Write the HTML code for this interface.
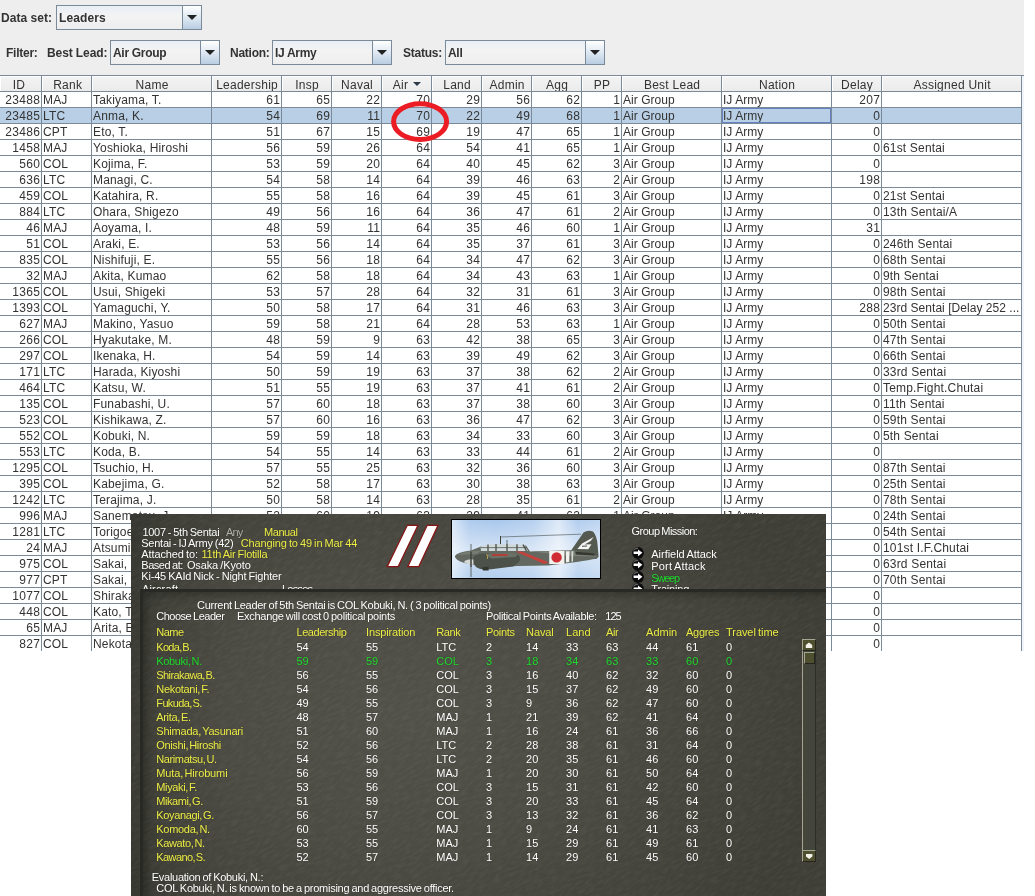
<!DOCTYPE html>
<html><head><meta charset="utf-8"><title>Leaders</title>
<style>
html,body{margin:0;padding:0;background:#fff;}
body{width:1035px;height:896px;position:relative;overflow:hidden;font-family:"Liberation Sans",sans-serif;font-size:12px;color:#333;}
#top{position:absolute;left:0;top:0;width:1024px;height:76px;background:#eee;}
#top,#tbl,#ov{will-change:transform;}
.lbl{position:absolute;font-weight:bold;font-size:12px;line-height:14px;white-space:nowrap;color:#333;letter-spacing:-0.25px;}
.combo{position:absolute;height:23px;border:1px solid #7a8a99;background:linear-gradient(#e9eff6,#f3f3f3 45%,#eeeeee);box-sizing:content-box;}
.combo .t{position:absolute;left:2px;top:5px;font-weight:bold;line-height:14px;white-space:nowrap;letter-spacing:-0.3px;}
.combo .b{position:absolute;right:0;top:0;width:18px;height:23px;border-left:1px solid #7a8a99;background:linear-gradient(#ffffff,#dbe6f1 55%,#b9cde2);}
.combo .b i{position:absolute;left:4px;top:9px;width:0;height:0;border-left:5px solid transparent;border-right:5px solid transparent;border-top:5px solid #222;}
#tbl{position:absolute;left:0;top:75px;width:1022px;height:576px;background:#fff;overflow:hidden;}
#hdr{position:absolute;left:0;top:0;width:1022px;height:17px;background:#7a8a99;}
.h{position:absolute;top:1px;height:15px;line-height:19px;letter-spacing:0.25px;text-align:center;background:linear-gradient(#f4f4f4,#ebebeb);box-shadow:inset 1px 1px 0 #fff;white-space:nowrap;overflow:hidden;}
.r{position:absolute;left:0;width:1022px;height:15px;border-bottom:1px solid #7a8a99;}
.r.sel{background:#b8cfe5;}
.c{position:absolute;top:0;height:15px;line-height:17px;white-space:nowrap;overflow:hidden;box-sizing:border-box;}
.c.l{padding-left:1px;text-align:left;letter-spacing:0.17px;}
.c.rt{padding-right:0.7px;text-align:right;letter-spacing:0.33px;}
.v{position:absolute;top:17px;width:1px;height:559px;background:#7a8a99;}
#ov{position:absolute;left:131px;top:514px;width:695px;height:382px;background:linear-gradient(to right,rgba(0,0,0,.16) 0,rgba(0,0,0,.07) 5%,rgba(0,0,0,0) 14%),radial-gradient(ellipse 60% 80% at 40% 52%,#51514a 0%,#4b4b43 45%,#3e3e37 100%);overflow:hidden;color:#fff;font-size:11px;}
#inner{position:absolute;left:9px;top:75px;width:700px;height:320px;background:transparent;border-top:3px solid #282824;border-left:3px solid #282824;overflow:hidden;box-shadow:inset 5px 5px 9px -2px rgba(0,0,0,.28);}
.sbb{position:absolute;width:12px;height:10px;background:#4d4f2e;border:1px solid;border-color:#a5a594 #25251f #25251f #a5a594;}
.g{position:absolute;white-space:nowrap;line-height:12px;font-size:11px;color:#fff;text-shadow:0 0 1px rgba(20,20,10,.55);}
.y{color:#eded48;}
.gr{color:#22dc30;}
.gy{color:#b0b0a8;}
</style></head><body>
<div id="top">
<span class="lbl" style="left:1px;top:11px;letter-spacing:0.05px">Data set:</span>
<div class="combo" style="left:56px;top:5px;width:144px"><span class="t" style="letter-spacing:0.1px">Leaders</span><span class="b"><i></i></span></div>
<span class="lbl" style="left:6px;top:46px">Filter:</span>
<span class="lbl" style="left:47px;top:46px;letter-spacing:-0.1px">Best Lead:</span>
<div class="combo" style="left:110px;top:40px;width:108px"><span class="t">Air Group</span><span class="b"><i></i></span></div>
<span class="lbl" style="left:230px;top:46px">Nation:</span>
<div class="combo" style="left:272px;top:40px;width:118px"><span class="t">IJ Army</span><span class="b"><i></i></span></div>
<span class="lbl" style="left:403px;top:46px">Status:</span>
<div class="combo" style="left:445px;top:40px;width:158px"><span class="t">All</span><span class="b"><i></i></span></div>
</div>
<div id="tbl">
<div id="hdr">
<div class="h" style="left:0px;padding-right:3px;width:38px">ID</div>
<div class="h" style="left:42px;padding-left:2.4px;width:46.6px">Rank</div>
<div class="h" style="left:92px;padding-left:1.2px;width:117.8px">Name</div>
<div class="h" style="left:212px;padding-left:1.2px;width:67.8px">Leadership</div>
<div class="h" style="left:282px;padding-left:1.2px;width:47.8px">Insp</div>
<div class="h" style="left:332px;padding-left:1.2px;width:47.8px">Naval</div>
<div class="h" style="left:382px;padding-left:1.2px;width:47.8px">Air <svg width="8" height="4" viewBox="0 0 8 4" style="vertical-align:3px;margin-left:1.5px"><path d="M0 0h8l-4 4z" fill="#2c3a48"/></svg></div>
<div class="h" style="left:432px;padding-left:1.2px;width:47.8px">Land</div>
<div class="h" style="left:482px;padding-left:1.2px;width:47.8px">Admin</div>
<div class="h" style="left:532px;padding-left:1.2px;width:47.8px">Agg</div>
<div class="h" style="left:582px;padding-left:1.2px;width:37.8px">PP</div>
<div class="h" style="left:622px;padding-left:1.2px;width:97.8px">Best Lead</div>
<div class="h" style="left:722px;padding-left:1.2px;width:107.8px">Nation</div>
<div class="h" style="left:832px;padding-left:1.2px;width:47.8px">Delay</div>
<div class="h" style="left:882px;padding-left:1.2px;width:137.8px">Assigned Unit</div>
</div>
<div class="r" style="top:17px">
<span class="c rt" style="left:0px;width:41px">23488</span>
<span class="c l" style="left:42px;width:49px">MAJ</span>
<span class="c l" style="left:92px;width:119px">Takiyama, T.</span>
<span class="c rt" style="left:212px;width:69px">61</span>
<span class="c rt" style="left:282px;width:49px">65</span>
<span class="c rt" style="left:332px;width:49px">22</span>
<span class="c rt" style="left:382px;width:49px">70</span>
<span class="c rt" style="left:432px;width:49px">29</span>
<span class="c rt" style="left:482px;width:49px">56</span>
<span class="c rt" style="left:532px;width:49px">62</span>
<span class="c rt" style="left:582px;width:39px">1</span>
<span class="c l" style="left:622px;width:99px;letter-spacing:0.04px">Air Group</span>
<span class="c l" style="left:722px;width:109px;letter-spacing:0.04px">IJ Army</span>
<span class="c rt" style="left:832px;width:49px">207</span>
</div>
<div class="r sel" style="top:33px">
<span class="c rt" style="left:0px;width:41px">23485</span>
<span class="c l" style="left:42px;width:49px">LTC</span>
<span class="c l" style="left:92px;width:119px">Anma, K.</span>
<span class="c rt" style="left:212px;width:69px">54</span>
<span class="c rt" style="left:282px;width:49px">69</span>
<span class="c rt" style="left:332px;width:49px">11</span>
<span class="c rt" style="left:382px;width:49px">70</span>
<span class="c rt" style="left:432px;width:49px">22</span>
<span class="c rt" style="left:482px;width:49px">49</span>
<span class="c rt" style="left:532px;width:49px">68</span>
<span class="c rt" style="left:582px;width:39px">1</span>
<span class="c l" style="left:622px;width:99px;letter-spacing:0.04px">Air Group</span>
<span class="c l" style="left:722px;width:109px;letter-spacing:0.04px">IJ Army</span>
<span class="c rt" style="left:832px;width:49px">0</span>
</div>
<div class="r" style="top:49px">
<span class="c rt" style="left:0px;width:41px">23486</span>
<span class="c l" style="left:42px;width:49px">CPT</span>
<span class="c l" style="left:92px;width:119px">Eto, T.</span>
<span class="c rt" style="left:212px;width:69px">51</span>
<span class="c rt" style="left:282px;width:49px">67</span>
<span class="c rt" style="left:332px;width:49px">15</span>
<span class="c rt" style="left:382px;width:49px">69</span>
<span class="c rt" style="left:432px;width:49px">19</span>
<span class="c rt" style="left:482px;width:49px">47</span>
<span class="c rt" style="left:532px;width:49px">65</span>
<span class="c rt" style="left:582px;width:39px">1</span>
<span class="c l" style="left:622px;width:99px;letter-spacing:0.04px">Air Group</span>
<span class="c l" style="left:722px;width:109px;letter-spacing:0.04px">IJ Army</span>
<span class="c rt" style="left:832px;width:49px">0</span>
</div>
<div class="r" style="top:65px">
<span class="c rt" style="left:0px;width:41px">1458</span>
<span class="c l" style="left:42px;width:49px">MAJ</span>
<span class="c l" style="left:92px;width:119px">Yoshioka, Hiroshi</span>
<span class="c rt" style="left:212px;width:69px">56</span>
<span class="c rt" style="left:282px;width:49px">59</span>
<span class="c rt" style="left:332px;width:49px">26</span>
<span class="c rt" style="left:382px;width:49px">64</span>
<span class="c rt" style="left:432px;width:49px">54</span>
<span class="c rt" style="left:482px;width:49px">41</span>
<span class="c rt" style="left:532px;width:49px">65</span>
<span class="c rt" style="left:582px;width:39px">1</span>
<span class="c l" style="left:622px;width:99px;letter-spacing:0.04px">Air Group</span>
<span class="c l" style="left:722px;width:109px;letter-spacing:0.04px">IJ Army</span>
<span class="c rt" style="left:832px;width:49px">0</span>
<span class="c l" style="left:882px;width:139px">61st Sentai</span>
</div>
<div class="r" style="top:81px">
<span class="c rt" style="left:0px;width:41px">560</span>
<span class="c l" style="left:42px;width:49px">COL</span>
<span class="c l" style="left:92px;width:119px">Kojima, F.</span>
<span class="c rt" style="left:212px;width:69px">53</span>
<span class="c rt" style="left:282px;width:49px">59</span>
<span class="c rt" style="left:332px;width:49px">20</span>
<span class="c rt" style="left:382px;width:49px">64</span>
<span class="c rt" style="left:432px;width:49px">40</span>
<span class="c rt" style="left:482px;width:49px">45</span>
<span class="c rt" style="left:532px;width:49px">62</span>
<span class="c rt" style="left:582px;width:39px">3</span>
<span class="c l" style="left:622px;width:99px;letter-spacing:0.04px">Air Group</span>
<span class="c l" style="left:722px;width:109px;letter-spacing:0.04px">IJ Army</span>
<span class="c rt" style="left:832px;width:49px">0</span>
</div>
<div class="r" style="top:97px">
<span class="c rt" style="left:0px;width:41px">636</span>
<span class="c l" style="left:42px;width:49px">LTC</span>
<span class="c l" style="left:92px;width:119px">Managi, C.</span>
<span class="c rt" style="left:212px;width:69px">54</span>
<span class="c rt" style="left:282px;width:49px">58</span>
<span class="c rt" style="left:332px;width:49px">14</span>
<span class="c rt" style="left:382px;width:49px">64</span>
<span class="c rt" style="left:432px;width:49px">39</span>
<span class="c rt" style="left:482px;width:49px">46</span>
<span class="c rt" style="left:532px;width:49px">63</span>
<span class="c rt" style="left:582px;width:39px">2</span>
<span class="c l" style="left:622px;width:99px;letter-spacing:0.04px">Air Group</span>
<span class="c l" style="left:722px;width:109px;letter-spacing:0.04px">IJ Army</span>
<span class="c rt" style="left:832px;width:49px">198</span>
</div>
<div class="r" style="top:113px">
<span class="c rt" style="left:0px;width:41px">459</span>
<span class="c l" style="left:42px;width:49px">COL</span>
<span class="c l" style="left:92px;width:119px">Katahira, R.</span>
<span class="c rt" style="left:212px;width:69px">55</span>
<span class="c rt" style="left:282px;width:49px">58</span>
<span class="c rt" style="left:332px;width:49px">16</span>
<span class="c rt" style="left:382px;width:49px">64</span>
<span class="c rt" style="left:432px;width:49px">39</span>
<span class="c rt" style="left:482px;width:49px">45</span>
<span class="c rt" style="left:532px;width:49px">61</span>
<span class="c rt" style="left:582px;width:39px">3</span>
<span class="c l" style="left:622px;width:99px;letter-spacing:0.04px">Air Group</span>
<span class="c l" style="left:722px;width:109px;letter-spacing:0.04px">IJ Army</span>
<span class="c rt" style="left:832px;width:49px">0</span>
<span class="c l" style="left:882px;width:139px">21st Sentai</span>
</div>
<div class="r" style="top:129px">
<span class="c rt" style="left:0px;width:41px">884</span>
<span class="c l" style="left:42px;width:49px">LTC</span>
<span class="c l" style="left:92px;width:119px">Ohara, Shigezo</span>
<span class="c rt" style="left:212px;width:69px">49</span>
<span class="c rt" style="left:282px;width:49px">56</span>
<span class="c rt" style="left:332px;width:49px">16</span>
<span class="c rt" style="left:382px;width:49px">64</span>
<span class="c rt" style="left:432px;width:49px">36</span>
<span class="c rt" style="left:482px;width:49px">47</span>
<span class="c rt" style="left:532px;width:49px">61</span>
<span class="c rt" style="left:582px;width:39px">2</span>
<span class="c l" style="left:622px;width:99px;letter-spacing:0.04px">Air Group</span>
<span class="c l" style="left:722px;width:109px;letter-spacing:0.04px">IJ Army</span>
<span class="c rt" style="left:832px;width:49px">0</span>
<span class="c l" style="left:882px;width:139px">13th Sentai/A</span>
</div>
<div class="r" style="top:145px">
<span class="c rt" style="left:0px;width:41px">46</span>
<span class="c l" style="left:42px;width:49px">MAJ</span>
<span class="c l" style="left:92px;width:119px">Aoyama, I.</span>
<span class="c rt" style="left:212px;width:69px">48</span>
<span class="c rt" style="left:282px;width:49px">59</span>
<span class="c rt" style="left:332px;width:49px">11</span>
<span class="c rt" style="left:382px;width:49px">64</span>
<span class="c rt" style="left:432px;width:49px">35</span>
<span class="c rt" style="left:482px;width:49px">46</span>
<span class="c rt" style="left:532px;width:49px">60</span>
<span class="c rt" style="left:582px;width:39px">1</span>
<span class="c l" style="left:622px;width:99px;letter-spacing:0.04px">Air Group</span>
<span class="c l" style="left:722px;width:109px;letter-spacing:0.04px">IJ Army</span>
<span class="c rt" style="left:832px;width:49px">31</span>
</div>
<div class="r" style="top:161px">
<span class="c rt" style="left:0px;width:41px">51</span>
<span class="c l" style="left:42px;width:49px">COL</span>
<span class="c l" style="left:92px;width:119px">Araki, E.</span>
<span class="c rt" style="left:212px;width:69px">53</span>
<span class="c rt" style="left:282px;width:49px">56</span>
<span class="c rt" style="left:332px;width:49px">14</span>
<span class="c rt" style="left:382px;width:49px">64</span>
<span class="c rt" style="left:432px;width:49px">35</span>
<span class="c rt" style="left:482px;width:49px">37</span>
<span class="c rt" style="left:532px;width:49px">61</span>
<span class="c rt" style="left:582px;width:39px">3</span>
<span class="c l" style="left:622px;width:99px;letter-spacing:0.04px">Air Group</span>
<span class="c l" style="left:722px;width:109px;letter-spacing:0.04px">IJ Army</span>
<span class="c rt" style="left:832px;width:49px">0</span>
<span class="c l" style="left:882px;width:139px">246th Sentai</span>
</div>
<div class="r" style="top:177px">
<span class="c rt" style="left:0px;width:41px">835</span>
<span class="c l" style="left:42px;width:49px">COL</span>
<span class="c l" style="left:92px;width:119px">Nishifuji, E.</span>
<span class="c rt" style="left:212px;width:69px">55</span>
<span class="c rt" style="left:282px;width:49px">56</span>
<span class="c rt" style="left:332px;width:49px">18</span>
<span class="c rt" style="left:382px;width:49px">64</span>
<span class="c rt" style="left:432px;width:49px">34</span>
<span class="c rt" style="left:482px;width:49px">47</span>
<span class="c rt" style="left:532px;width:49px">62</span>
<span class="c rt" style="left:582px;width:39px">3</span>
<span class="c l" style="left:622px;width:99px;letter-spacing:0.04px">Air Group</span>
<span class="c l" style="left:722px;width:109px;letter-spacing:0.04px">IJ Army</span>
<span class="c rt" style="left:832px;width:49px">0</span>
<span class="c l" style="left:882px;width:139px">68th Sentai</span>
</div>
<div class="r" style="top:193px">
<span class="c rt" style="left:0px;width:41px">32</span>
<span class="c l" style="left:42px;width:49px">MAJ</span>
<span class="c l" style="left:92px;width:119px">Akita, Kumao</span>
<span class="c rt" style="left:212px;width:69px">62</span>
<span class="c rt" style="left:282px;width:49px">58</span>
<span class="c rt" style="left:332px;width:49px">18</span>
<span class="c rt" style="left:382px;width:49px">64</span>
<span class="c rt" style="left:432px;width:49px">34</span>
<span class="c rt" style="left:482px;width:49px">43</span>
<span class="c rt" style="left:532px;width:49px">63</span>
<span class="c rt" style="left:582px;width:39px">1</span>
<span class="c l" style="left:622px;width:99px;letter-spacing:0.04px">Air Group</span>
<span class="c l" style="left:722px;width:109px;letter-spacing:0.04px">IJ Army</span>
<span class="c rt" style="left:832px;width:49px">0</span>
<span class="c l" style="left:882px;width:139px">9th Sentai</span>
</div>
<div class="r" style="top:209px">
<span class="c rt" style="left:0px;width:41px">1365</span>
<span class="c l" style="left:42px;width:49px">COL</span>
<span class="c l" style="left:92px;width:119px">Usui, Shigeki</span>
<span class="c rt" style="left:212px;width:69px">53</span>
<span class="c rt" style="left:282px;width:49px">57</span>
<span class="c rt" style="left:332px;width:49px">28</span>
<span class="c rt" style="left:382px;width:49px">64</span>
<span class="c rt" style="left:432px;width:49px">32</span>
<span class="c rt" style="left:482px;width:49px">31</span>
<span class="c rt" style="left:532px;width:49px">61</span>
<span class="c rt" style="left:582px;width:39px">3</span>
<span class="c l" style="left:622px;width:99px;letter-spacing:0.04px">Air Group</span>
<span class="c l" style="left:722px;width:109px;letter-spacing:0.04px">IJ Army</span>
<span class="c rt" style="left:832px;width:49px">0</span>
<span class="c l" style="left:882px;width:139px">98th Sentai</span>
</div>
<div class="r" style="top:225px">
<span class="c rt" style="left:0px;width:41px">1393</span>
<span class="c l" style="left:42px;width:49px">COL</span>
<span class="c l" style="left:92px;width:119px">Yamaguchi, Y.</span>
<span class="c rt" style="left:212px;width:69px">50</span>
<span class="c rt" style="left:282px;width:49px">58</span>
<span class="c rt" style="left:332px;width:49px">17</span>
<span class="c rt" style="left:382px;width:49px">64</span>
<span class="c rt" style="left:432px;width:49px">31</span>
<span class="c rt" style="left:482px;width:49px">46</span>
<span class="c rt" style="left:532px;width:49px">63</span>
<span class="c rt" style="left:582px;width:39px">3</span>
<span class="c l" style="left:622px;width:99px;letter-spacing:0.04px">Air Group</span>
<span class="c l" style="left:722px;width:109px;letter-spacing:0.04px">IJ Army</span>
<span class="c rt" style="left:832px;width:49px">288</span>
<span class="c l" style="left:882px;width:139px;letter-spacing:0.04px">23rd Sentai [Delay 252 ...</span>
</div>
<div class="r" style="top:241px">
<span class="c rt" style="left:0px;width:41px">627</span>
<span class="c l" style="left:42px;width:49px">MAJ</span>
<span class="c l" style="left:92px;width:119px">Makino, Yasuo</span>
<span class="c rt" style="left:212px;width:69px">59</span>
<span class="c rt" style="left:282px;width:49px">58</span>
<span class="c rt" style="left:332px;width:49px">21</span>
<span class="c rt" style="left:382px;width:49px">64</span>
<span class="c rt" style="left:432px;width:49px">28</span>
<span class="c rt" style="left:482px;width:49px">53</span>
<span class="c rt" style="left:532px;width:49px">63</span>
<span class="c rt" style="left:582px;width:39px">1</span>
<span class="c l" style="left:622px;width:99px;letter-spacing:0.04px">Air Group</span>
<span class="c l" style="left:722px;width:109px;letter-spacing:0.04px">IJ Army</span>
<span class="c rt" style="left:832px;width:49px">0</span>
<span class="c l" style="left:882px;width:139px">50th Sentai</span>
</div>
<div class="r" style="top:257px">
<span class="c rt" style="left:0px;width:41px">266</span>
<span class="c l" style="left:42px;width:49px">COL</span>
<span class="c l" style="left:92px;width:119px">Hyakutake, M.</span>
<span class="c rt" style="left:212px;width:69px">48</span>
<span class="c rt" style="left:282px;width:49px">59</span>
<span class="c rt" style="left:332px;width:49px">9</span>
<span class="c rt" style="left:382px;width:49px">63</span>
<span class="c rt" style="left:432px;width:49px">42</span>
<span class="c rt" style="left:482px;width:49px">38</span>
<span class="c rt" style="left:532px;width:49px">65</span>
<span class="c rt" style="left:582px;width:39px">3</span>
<span class="c l" style="left:622px;width:99px;letter-spacing:0.04px">Air Group</span>
<span class="c l" style="left:722px;width:109px;letter-spacing:0.04px">IJ Army</span>
<span class="c rt" style="left:832px;width:49px">0</span>
<span class="c l" style="left:882px;width:139px">47th Sentai</span>
</div>
<div class="r" style="top:273px">
<span class="c rt" style="left:0px;width:41px">297</span>
<span class="c l" style="left:42px;width:49px">COL</span>
<span class="c l" style="left:92px;width:119px">Ikenaka, H.</span>
<span class="c rt" style="left:212px;width:69px">54</span>
<span class="c rt" style="left:282px;width:49px">59</span>
<span class="c rt" style="left:332px;width:49px">14</span>
<span class="c rt" style="left:382px;width:49px">63</span>
<span class="c rt" style="left:432px;width:49px">39</span>
<span class="c rt" style="left:482px;width:49px">49</span>
<span class="c rt" style="left:532px;width:49px">62</span>
<span class="c rt" style="left:582px;width:39px">3</span>
<span class="c l" style="left:622px;width:99px;letter-spacing:0.04px">Air Group</span>
<span class="c l" style="left:722px;width:109px;letter-spacing:0.04px">IJ Army</span>
<span class="c rt" style="left:832px;width:49px">0</span>
<span class="c l" style="left:882px;width:139px">66th Sentai</span>
</div>
<div class="r" style="top:289px">
<span class="c rt" style="left:0px;width:41px">171</span>
<span class="c l" style="left:42px;width:49px">LTC</span>
<span class="c l" style="left:92px;width:119px">Harada, Kiyoshi</span>
<span class="c rt" style="left:212px;width:69px">50</span>
<span class="c rt" style="left:282px;width:49px">59</span>
<span class="c rt" style="left:332px;width:49px">19</span>
<span class="c rt" style="left:382px;width:49px">63</span>
<span class="c rt" style="left:432px;width:49px">37</span>
<span class="c rt" style="left:482px;width:49px">38</span>
<span class="c rt" style="left:532px;width:49px">62</span>
<span class="c rt" style="left:582px;width:39px">2</span>
<span class="c l" style="left:622px;width:99px;letter-spacing:0.04px">Air Group</span>
<span class="c l" style="left:722px;width:109px;letter-spacing:0.04px">IJ Army</span>
<span class="c rt" style="left:832px;width:49px">0</span>
<span class="c l" style="left:882px;width:139px">33rd Sentai</span>
</div>
<div class="r" style="top:305px">
<span class="c rt" style="left:0px;width:41px">464</span>
<span class="c l" style="left:42px;width:49px">LTC</span>
<span class="c l" style="left:92px;width:119px">Katsu, W.</span>
<span class="c rt" style="left:212px;width:69px">51</span>
<span class="c rt" style="left:282px;width:49px">55</span>
<span class="c rt" style="left:332px;width:49px">19</span>
<span class="c rt" style="left:382px;width:49px">63</span>
<span class="c rt" style="left:432px;width:49px">37</span>
<span class="c rt" style="left:482px;width:49px">41</span>
<span class="c rt" style="left:532px;width:49px">61</span>
<span class="c rt" style="left:582px;width:39px">2</span>
<span class="c l" style="left:622px;width:99px;letter-spacing:0.04px">Air Group</span>
<span class="c l" style="left:722px;width:109px;letter-spacing:0.04px">IJ Army</span>
<span class="c rt" style="left:832px;width:49px">0</span>
<span class="c l" style="left:882px;width:139px">Temp.Fight.Chutai</span>
</div>
<div class="r" style="top:321px">
<span class="c rt" style="left:0px;width:41px">135</span>
<span class="c l" style="left:42px;width:49px">COL</span>
<span class="c l" style="left:92px;width:119px">Funabashi, U.</span>
<span class="c rt" style="left:212px;width:69px">57</span>
<span class="c rt" style="left:282px;width:49px">60</span>
<span class="c rt" style="left:332px;width:49px">18</span>
<span class="c rt" style="left:382px;width:49px">63</span>
<span class="c rt" style="left:432px;width:49px">37</span>
<span class="c rt" style="left:482px;width:49px">38</span>
<span class="c rt" style="left:532px;width:49px">60</span>
<span class="c rt" style="left:582px;width:39px">3</span>
<span class="c l" style="left:622px;width:99px;letter-spacing:0.04px">Air Group</span>
<span class="c l" style="left:722px;width:109px;letter-spacing:0.04px">IJ Army</span>
<span class="c rt" style="left:832px;width:49px">0</span>
<span class="c l" style="left:882px;width:139px">11th Sentai</span>
</div>
<div class="r" style="top:337px">
<span class="c rt" style="left:0px;width:41px">523</span>
<span class="c l" style="left:42px;width:49px">COL</span>
<span class="c l" style="left:92px;width:119px">Kishikawa, Z.</span>
<span class="c rt" style="left:212px;width:69px">57</span>
<span class="c rt" style="left:282px;width:49px">60</span>
<span class="c rt" style="left:332px;width:49px">16</span>
<span class="c rt" style="left:382px;width:49px">63</span>
<span class="c rt" style="left:432px;width:49px">36</span>
<span class="c rt" style="left:482px;width:49px">47</span>
<span class="c rt" style="left:532px;width:49px">62</span>
<span class="c rt" style="left:582px;width:39px">3</span>
<span class="c l" style="left:622px;width:99px;letter-spacing:0.04px">Air Group</span>
<span class="c l" style="left:722px;width:109px;letter-spacing:0.04px">IJ Army</span>
<span class="c rt" style="left:832px;width:49px">0</span>
<span class="c l" style="left:882px;width:139px">59th Sentai</span>
</div>
<div class="r" style="top:353px">
<span class="c rt" style="left:0px;width:41px">552</span>
<span class="c l" style="left:42px;width:49px">COL</span>
<span class="c l" style="left:92px;width:119px">Kobuki, N.</span>
<span class="c rt" style="left:212px;width:69px">59</span>
<span class="c rt" style="left:282px;width:49px">59</span>
<span class="c rt" style="left:332px;width:49px">18</span>
<span class="c rt" style="left:382px;width:49px">63</span>
<span class="c rt" style="left:432px;width:49px">34</span>
<span class="c rt" style="left:482px;width:49px">33</span>
<span class="c rt" style="left:532px;width:49px">60</span>
<span class="c rt" style="left:582px;width:39px">3</span>
<span class="c l" style="left:622px;width:99px;letter-spacing:0.04px">Air Group</span>
<span class="c l" style="left:722px;width:109px;letter-spacing:0.04px">IJ Army</span>
<span class="c rt" style="left:832px;width:49px">0</span>
<span class="c l" style="left:882px;width:139px">5th Sentai</span>
</div>
<div class="r" style="top:369px">
<span class="c rt" style="left:0px;width:41px">553</span>
<span class="c l" style="left:42px;width:49px">LTC</span>
<span class="c l" style="left:92px;width:119px">Koda, B.</span>
<span class="c rt" style="left:212px;width:69px">54</span>
<span class="c rt" style="left:282px;width:49px">55</span>
<span class="c rt" style="left:332px;width:49px">14</span>
<span class="c rt" style="left:382px;width:49px">63</span>
<span class="c rt" style="left:432px;width:49px">33</span>
<span class="c rt" style="left:482px;width:49px">44</span>
<span class="c rt" style="left:532px;width:49px">61</span>
<span class="c rt" style="left:582px;width:39px">2</span>
<span class="c l" style="left:622px;width:99px;letter-spacing:0.04px">Air Group</span>
<span class="c l" style="left:722px;width:109px;letter-spacing:0.04px">IJ Army</span>
<span class="c rt" style="left:832px;width:49px">0</span>
</div>
<div class="r" style="top:385px">
<span class="c rt" style="left:0px;width:41px">1295</span>
<span class="c l" style="left:42px;width:49px">COL</span>
<span class="c l" style="left:92px;width:119px">Tsuchio, H.</span>
<span class="c rt" style="left:212px;width:69px">57</span>
<span class="c rt" style="left:282px;width:49px">55</span>
<span class="c rt" style="left:332px;width:49px">25</span>
<span class="c rt" style="left:382px;width:49px">63</span>
<span class="c rt" style="left:432px;width:49px">32</span>
<span class="c rt" style="left:482px;width:49px">36</span>
<span class="c rt" style="left:532px;width:49px">60</span>
<span class="c rt" style="left:582px;width:39px">3</span>
<span class="c l" style="left:622px;width:99px;letter-spacing:0.04px">Air Group</span>
<span class="c l" style="left:722px;width:109px;letter-spacing:0.04px">IJ Army</span>
<span class="c rt" style="left:832px;width:49px">0</span>
<span class="c l" style="left:882px;width:139px">87th Sentai</span>
</div>
<div class="r" style="top:401px">
<span class="c rt" style="left:0px;width:41px">395</span>
<span class="c l" style="left:42px;width:49px">COL</span>
<span class="c l" style="left:92px;width:119px">Kabejima, G.</span>
<span class="c rt" style="left:212px;width:69px">52</span>
<span class="c rt" style="left:282px;width:49px">58</span>
<span class="c rt" style="left:332px;width:49px">17</span>
<span class="c rt" style="left:382px;width:49px">63</span>
<span class="c rt" style="left:432px;width:49px">30</span>
<span class="c rt" style="left:482px;width:49px">38</span>
<span class="c rt" style="left:532px;width:49px">63</span>
<span class="c rt" style="left:582px;width:39px">3</span>
<span class="c l" style="left:622px;width:99px;letter-spacing:0.04px">Air Group</span>
<span class="c l" style="left:722px;width:109px;letter-spacing:0.04px">IJ Army</span>
<span class="c rt" style="left:832px;width:49px">0</span>
<span class="c l" style="left:882px;width:139px">25th Sentai</span>
</div>
<div class="r" style="top:417px">
<span class="c rt" style="left:0px;width:41px">1242</span>
<span class="c l" style="left:42px;width:49px">LTC</span>
<span class="c l" style="left:92px;width:119px">Terajima, J.</span>
<span class="c rt" style="left:212px;width:69px">50</span>
<span class="c rt" style="left:282px;width:49px">58</span>
<span class="c rt" style="left:332px;width:49px">14</span>
<span class="c rt" style="left:382px;width:49px">63</span>
<span class="c rt" style="left:432px;width:49px">28</span>
<span class="c rt" style="left:482px;width:49px">35</span>
<span class="c rt" style="left:532px;width:49px">61</span>
<span class="c rt" style="left:582px;width:39px">2</span>
<span class="c l" style="left:622px;width:99px;letter-spacing:0.04px">Air Group</span>
<span class="c l" style="left:722px;width:109px;letter-spacing:0.04px">IJ Army</span>
<span class="c rt" style="left:832px;width:49px">0</span>
<span class="c l" style="left:882px;width:139px">78th Sentai</span>
</div>
<div class="r" style="top:433px">
<span class="c rt" style="left:0px;width:41px">996</span>
<span class="c l" style="left:42px;width:49px">MAJ</span>
<span class="c l" style="left:92px;width:119px">Sanematsu, J.</span>
<span class="c rt" style="left:212px;width:69px">52</span>
<span class="c rt" style="left:282px;width:49px">60</span>
<span class="c rt" style="left:332px;width:49px">19</span>
<span class="c rt" style="left:382px;width:49px">63</span>
<span class="c rt" style="left:432px;width:49px">29</span>
<span class="c rt" style="left:482px;width:49px">41</span>
<span class="c rt" style="left:532px;width:49px">62</span>
<span class="c rt" style="left:582px;width:39px">1</span>
<span class="c l" style="left:622px;width:99px;letter-spacing:0.04px">Air Group</span>
<span class="c l" style="left:722px;width:109px;letter-spacing:0.04px">IJ Army</span>
<span class="c rt" style="left:832px;width:49px">0</span>
<span class="c l" style="left:882px;width:139px">24th Sentai</span>
</div>
<div class="r" style="top:449px">
<span class="c rt" style="left:0px;width:41px">1281</span>
<span class="c l" style="left:42px;width:49px">LTC</span>
<span class="c l" style="left:92px;width:119px">Torigoe, K.</span>
<span class="c rt" style="left:212px;width:69px">55</span>
<span class="c rt" style="left:282px;width:49px">57</span>
<span class="c rt" style="left:332px;width:49px">16</span>
<span class="c rt" style="left:382px;width:49px">63</span>
<span class="c rt" style="left:432px;width:49px">27</span>
<span class="c rt" style="left:482px;width:49px">40</span>
<span class="c rt" style="left:532px;width:49px">62</span>
<span class="c rt" style="left:582px;width:39px">2</span>
<span class="c l" style="left:622px;width:99px;letter-spacing:0.04px">Air Group</span>
<span class="c l" style="left:722px;width:109px;letter-spacing:0.04px">IJ Army</span>
<span class="c rt" style="left:832px;width:49px">0</span>
<span class="c l" style="left:882px;width:139px">54th Sentai</span>
</div>
<div class="r" style="top:465px">
<span class="c rt" style="left:0px;width:41px">24</span>
<span class="c l" style="left:42px;width:49px">MAJ</span>
<span class="c l" style="left:92px;width:119px">Atsumi, M.</span>
<span class="c rt" style="left:212px;width:69px">50</span>
<span class="c rt" style="left:282px;width:49px">58</span>
<span class="c rt" style="left:332px;width:49px">15</span>
<span class="c rt" style="left:382px;width:49px">63</span>
<span class="c rt" style="left:432px;width:49px">27</span>
<span class="c rt" style="left:482px;width:49px">42</span>
<span class="c rt" style="left:532px;width:49px">61</span>
<span class="c rt" style="left:582px;width:39px">1</span>
<span class="c l" style="left:622px;width:99px;letter-spacing:0.04px">Air Group</span>
<span class="c l" style="left:722px;width:109px;letter-spacing:0.04px">IJ Army</span>
<span class="c rt" style="left:832px;width:49px">0</span>
<span class="c l" style="left:882px;width:139px">101st I.F.Chutai</span>
</div>
<div class="r" style="top:481px">
<span class="c rt" style="left:0px;width:41px">975</span>
<span class="c l" style="left:42px;width:49px">COL</span>
<span class="c l" style="left:92px;width:119px">Sakai, T.</span>
<span class="c rt" style="left:212px;width:69px">53</span>
<span class="c rt" style="left:282px;width:49px">57</span>
<span class="c rt" style="left:332px;width:49px">17</span>
<span class="c rt" style="left:382px;width:49px">63</span>
<span class="c rt" style="left:432px;width:49px">26</span>
<span class="c rt" style="left:482px;width:49px">39</span>
<span class="c rt" style="left:532px;width:49px">60</span>
<span class="c rt" style="left:582px;width:39px">3</span>
<span class="c l" style="left:622px;width:99px;letter-spacing:0.04px">Air Group</span>
<span class="c l" style="left:722px;width:109px;letter-spacing:0.04px">IJ Army</span>
<span class="c rt" style="left:832px;width:49px">0</span>
<span class="c l" style="left:882px;width:139px">63rd Sentai</span>
</div>
<div class="r" style="top:497px">
<span class="c rt" style="left:0px;width:41px">977</span>
<span class="c l" style="left:42px;width:49px">CPT</span>
<span class="c l" style="left:92px;width:119px">Sakai, Y.</span>
<span class="c rt" style="left:212px;width:69px">49</span>
<span class="c rt" style="left:282px;width:49px">58</span>
<span class="c rt" style="left:332px;width:49px">14</span>
<span class="c rt" style="left:382px;width:49px">63</span>
<span class="c rt" style="left:432px;width:49px">25</span>
<span class="c rt" style="left:482px;width:49px">38</span>
<span class="c rt" style="left:532px;width:49px">61</span>
<span class="c rt" style="left:582px;width:39px">1</span>
<span class="c l" style="left:622px;width:99px;letter-spacing:0.04px">Air Group</span>
<span class="c l" style="left:722px;width:109px;letter-spacing:0.04px">IJ Army</span>
<span class="c rt" style="left:832px;width:49px">0</span>
<span class="c l" style="left:882px;width:139px">70th Sentai</span>
</div>
<div class="r" style="top:513px">
<span class="c rt" style="left:0px;width:41px">1077</span>
<span class="c l" style="left:42px;width:49px">COL</span>
<span class="c l" style="left:92px;width:119px">Shirakawa, B.</span>
<span class="c rt" style="left:212px;width:69px">56</span>
<span class="c rt" style="left:282px;width:49px">55</span>
<span class="c rt" style="left:332px;width:49px">16</span>
<span class="c rt" style="left:382px;width:49px">62</span>
<span class="c rt" style="left:432px;width:49px">40</span>
<span class="c rt" style="left:482px;width:49px">32</span>
<span class="c rt" style="left:532px;width:49px">60</span>
<span class="c rt" style="left:582px;width:39px">3</span>
<span class="c l" style="left:622px;width:99px;letter-spacing:0.04px">Air Group</span>
<span class="c l" style="left:722px;width:109px;letter-spacing:0.04px">IJ Army</span>
<span class="c rt" style="left:832px;width:49px">0</span>
</div>
<div class="r" style="top:529px">
<span class="c rt" style="left:0px;width:41px">448</span>
<span class="c l" style="left:42px;width:49px">COL</span>
<span class="c l" style="left:92px;width:119px">Kato, T.</span>
<span class="c rt" style="left:212px;width:69px">51</span>
<span class="c rt" style="left:282px;width:49px">56</span>
<span class="c rt" style="left:332px;width:49px">15</span>
<span class="c rt" style="left:382px;width:49px">62</span>
<span class="c rt" style="left:432px;width:49px">39</span>
<span class="c rt" style="left:482px;width:49px">44</span>
<span class="c rt" style="left:532px;width:49px">61</span>
<span class="c rt" style="left:582px;width:39px">3</span>
<span class="c l" style="left:622px;width:99px;letter-spacing:0.04px">Air Group</span>
<span class="c l" style="left:722px;width:109px;letter-spacing:0.04px">IJ Army</span>
<span class="c rt" style="left:832px;width:49px">0</span>
</div>
<div class="r" style="top:545px">
<span class="c rt" style="left:0px;width:41px">65</span>
<span class="c l" style="left:42px;width:49px">MAJ</span>
<span class="c l" style="left:92px;width:119px">Arita, E.</span>
<span class="c rt" style="left:212px;width:69px">48</span>
<span class="c rt" style="left:282px;width:49px">57</span>
<span class="c rt" style="left:332px;width:49px">21</span>
<span class="c rt" style="left:382px;width:49px">62</span>
<span class="c rt" style="left:432px;width:49px">39</span>
<span class="c rt" style="left:482px;width:49px">41</span>
<span class="c rt" style="left:532px;width:49px">64</span>
<span class="c rt" style="left:582px;width:39px">1</span>
<span class="c l" style="left:622px;width:99px;letter-spacing:0.04px">Air Group</span>
<span class="c l" style="left:722px;width:109px;letter-spacing:0.04px">IJ Army</span>
<span class="c rt" style="left:832px;width:49px">0</span>
</div>
<div class="r" style="top:561px">
<span class="c rt" style="left:0px;width:41px">827</span>
<span class="c l" style="left:42px;width:49px">COL</span>
<span class="c l" style="left:92px;width:119px">Nekotani, F.</span>
<span class="c rt" style="left:212px;width:69px">54</span>
<span class="c rt" style="left:282px;width:49px">56</span>
<span class="c rt" style="left:332px;width:49px">15</span>
<span class="c rt" style="left:382px;width:49px">62</span>
<span class="c rt" style="left:432px;width:49px">37</span>
<span class="c rt" style="left:482px;width:49px">49</span>
<span class="c rt" style="left:532px;width:49px">60</span>
<span class="c rt" style="left:582px;width:39px">3</span>
<span class="c l" style="left:622px;width:99px;letter-spacing:0.04px">Air Group</span>
<span class="c l" style="left:722px;width:109px;letter-spacing:0.04px">IJ Army</span>
<span class="c rt" style="left:832px;width:49px">0</span>
</div>
<div class="v" style="left:41px"></div>
<div class="v" style="left:91px"></div>
<div class="v" style="left:211px"></div>
<div class="v" style="left:281px"></div>
<div class="v" style="left:331px"></div>
<div class="v" style="left:381px"></div>
<div class="v" style="left:431px"></div>
<div class="v" style="left:481px"></div>
<div class="v" style="left:531px"></div>
<div class="v" style="left:581px"></div>
<div class="v" style="left:621px"></div>
<div class="v" style="left:721px"></div>
<div class="v" style="left:831px"></div>
<div class="v" style="left:881px"></div>
<div class="v" style="left:1021px"></div>
<div style="position:absolute;left:722px;top:33px;width:107px;height:13px;border:1px solid #6382bf"></div>
</div>
<div style="position:absolute;left:1022px;top:75px;width:2px;height:1px;background:#7a8a99"></div><div style="position:absolute;left:1022px;top:76px;width:2px;height:575px;background:#f1f5f9"></div>
<svg style="position:absolute;left:385px;top:95px" width="70" height="52" viewBox="0 0 70 52"><ellipse cx="35.1" cy="26.6" rx="26.5" ry="17.9" fill="none" stroke="#ec1c24" stroke-width="5"/></svg>
<div id="ov">
<svg width="695" height="382" style="position:absolute;left:0;top:0"><defs><filter id="nz" x="0" y="0" width="100%" height="100%"><feTurbulence type="fractalNoise" baseFrequency="0.12 0.4" numOctaves="2" seed="7"/><feColorMatrix type="matrix" values="0 0 0 0 0.7  0 0 0 0 0.7  0 0 0 0 0.62  1.2 0 0 0 -0.45"/></filter></defs><g transform="rotate(-32 347 191)"><rect x="-200" y="-300" width="1100" height="1000" filter="url(#nz)" opacity="0.11"/></g></svg>
<div style="position:absolute;left:0;top:0;width:695px;height:75px;overflow:hidden">
<span class="g " style="left:11.4px;top:12px;letter-spacing:-0.28px;word-spacing:-0.7px">1007 - 5th Sentai</span>
<span class="g gy" style="left:94.9px;top:12px;letter-spacing:-0.78px;word-spacing:-0.7px">Any</span>
<span class="g y" style="left:133.1px;top:12px;letter-spacing:-0.46px;word-spacing:-0.7px">Manual</span>
<span class="g " style="left:10.3px;top:23px;letter-spacing:-0.26px;word-spacing:-0.7px">Sentai - IJ Army (42)</span>
<span class="g y" style="left:109.8px;top:23px;letter-spacing:-0.15px;word-spacing:-0.7px">Changing to 49 in Mar 44</span>
<span class="g " style="left:10.3px;top:34px;letter-spacing:-0.12px;word-spacing:-0.7px">Attached to:</span>
<span class="g y" style="left:70.5px;top:34px;letter-spacing:-0.24px;word-spacing:-0.7px">11th Air Flotilla</span>
<span class="g " style="left:10.3px;top:45px;letter-spacing:-0.47px;word-spacing:-0.7px">Based at:</span>
<span class="g " style="left:55.9px;top:45px;letter-spacing:-0.12px;word-spacing:-0.7px">Osaka /Kyoto</span>
<span class="g " style="left:10.3px;top:56px;letter-spacing:-0.20px;word-spacing:-0.7px">Ki-45 KAId Nick - Night Fighter</span>
<span class="g " style="left:11px;top:69px;letter-spacing:0.17px;word-spacing:-0.7px">Aircraft</span>
<span class="g " style="left:151px;top:69px;letter-spacing:-0.77px;word-spacing:-0.7px">Losses</span>
<span class="g " style="left:500.6px;top:11px;letter-spacing:-0.54px;word-spacing:-0.7px">Group Mission:</span>
<span class="g " style="left:520.3px;top:34px;letter-spacing:-0.03px;word-spacing:-0.7px">Airfield Attack</span>
<span class="g " style="left:520.3px;top:46px;letter-spacing:0.17px;word-spacing:-0.7px">Port Attack</span>
<span class="g gr" style="left:520.3px;top:58px;letter-spacing:-1.21px;word-spacing:-0.7px">Sweep</span>
<span class="g " style="left:520.3px;top:69px;letter-spacing:-0.19px;word-spacing:-0.7px">Training</span>
<svg style="position:absolute;left:254px;top:8px" width="60" height="50" viewBox="385 522 60 50"><g fill="#fff" stroke="#861616" stroke-width="1.3"><path d="M407.3 525.3H418L398.2 566.6H387.2z"/><path d="M427.2 525.3H438L418.8 566.6H407.8z"/></g></svg>
<svg style="position:absolute;left:320px;top:5px" width="150" height="60" viewBox="0 0 150 60">
<defs><linearGradient id="sky" x1="0" y1="0" x2="0" y2="1"><stop offset="0" stop-color="#a9c8ec"/><stop offset=".5" stop-color="#d3e2f5"/><stop offset="1" stop-color="#b3cfee"/></linearGradient><linearGradient id="cl" x1="0" y1="0" x2="1" y2="0"><stop offset="0" stop-color="#fff" stop-opacity=".55"/><stop offset=".12" stop-color="#fff" stop-opacity=".05"/><stop offset=".3" stop-color="#fff" stop-opacity="0"/><stop offset=".55" stop-color="#fff" stop-opacity=".15"/><stop offset=".72" stop-color="#fff" stop-opacity=".6"/><stop offset=".85" stop-color="#fff" stop-opacity=".1"/><stop offset="1" stop-color="#fff" stop-opacity=".25"/></linearGradient></defs>
<rect x="0" y="0" width="150" height="60" fill="#000"/><rect x="1" y="1" width="148" height="58" fill="url(#sky)"/><rect x="1" y="1" width="148" height="58" fill="url(#cl)"/>
<path d="M49.5 17V27" stroke="#3c3f3a" stroke-width="1"/><path d="M49.5 18L130 15.2" stroke="#5d6466" stroke-width=".7"/><path d="M56 21V26" stroke="#4a4e48" stroke-width=".8"/>
<path d="M119 33L132.5 13.5Q137 10.5 142 12.5Q146 17 146.6 26L147.6 37.5L145 40L120 40z" fill="#555a51"/>
<path d="M3.8 37.2Q6 33.5 20 31.6L30 27.6Q40 25 75 26.6L79 32.4L122 31.2L147.4 37L146 39.5Q130 43 97 46.4L67 47Q30 49 12 43.5Q4.5 41 3.8 37.2z" fill="#636860"/>
<path d="M80 32.6L122 31.4L146 37.4L120 37z" fill="#7b8077"/><path d="M6 36Q12 33 22 32L30 31.6L26 35z" fill="#777c73"/>
<path d="M124 32.4L143 34.6Q145 36.2 142 36.6L125 35.6z" fill="#33372f"/>
<path d="M29.5 28Q33 25.4 45 25L73 25.6L77 32L30 32z" fill="#cfd8da"/><path d="M37 25.4V32M45 25V32M56 25V32M66 25.2V32M72 25.6L75.5 32" stroke="#474c43" stroke-width="1.3"/><path d="M29.5 28.6H76" stroke="#474c43" stroke-width=".7"/>
<path d="M64.6 32.4L70.8 32.4L97.8 43.2L93.2 45z" fill="#c4423b"/>
<rect x="98.2" y="32" width="15.2" height="13" fill="#f1f1ee"/><circle cx="105.6" cy="38.4" r="5.2" fill="#cf2d31"/><path d="M115 32.2H118.6L118.2 43L115 43.6z" fill="#f1f1ee"/><path d="M120.5 32.2H122.3L122 42.4L120.5 42.7z" fill="#d9dbd6"/>
<path d="M126.4 30L131 24.5L142.8 18L139.6 22L133.6 25.4L140.4 25.2L137.4 30.2z" fill="#f4f4f2"/><path d="M131 27.2L136 27" stroke="#4a4f46" stroke-width="1.1"/>
<path d="M22.4 38Q25 34.4 37 34.2L66 35.6Q71 38 68 43L62 47.6L46 49.6Q30 52 25 48Q21 43 22.4 38z" fill="#4c5149"/><path d="M37.6 34.4L64 33.8Q68.5 35.6 64 38L41 39.4Q35 37.4 37.6 34.4z" fill="#6b7066"/><path d="M41 36.2L56.5 35.8" stroke="#bb3a33" stroke-width="1.7"/><path d="M35.6 34.8Q37.4 37.6 36.4 39.8" stroke="#c5b04e" stroke-width="1" fill="none"/>
<path d="M13.4 42Q18 39.6 22.4 40.6V45.6Q17 46 13.4 43.6z" fill="#d5d9d6"/><path d="M20 25V58" stroke="#50554f" stroke-width="1.7" opacity=".5"/><path d="M20 33V48" stroke="#3c403b" stroke-width="2" opacity=".6"/>
<path d="M30.6 48.6L37.6 47.6V51.6H32z" fill="#35382f"/>
</svg>
<svg style="position:absolute;left:500px;top:31.5px" width="14" height="14" viewBox="0 0 14 14"><circle cx="7" cy="7" r="5.9" fill="#0b0b0b"/><path d="M6.5 1.6Q3 2 2 5Q4 3 7.5 2.8z" fill="#777" opacity=".8"/><path d="M2.6 5.6H7V3.4L11.4 6.8L7 10.2V8H2.6z" fill="#fff"/></svg>
<svg style="position:absolute;left:500px;top:43.5px" width="14" height="14" viewBox="0 0 14 14"><circle cx="7" cy="7" r="5.9" fill="#0b0b0b"/><path d="M6.5 1.6Q3 2 2 5Q4 3 7.5 2.8z" fill="#777" opacity=".8"/><path d="M2.6 5.6H7V3.4L11.4 6.8L7 10.2V8H2.6z" fill="#fff"/></svg>
<svg style="position:absolute;left:500px;top:55.5px" width="14" height="14" viewBox="0 0 14 14"><circle cx="7" cy="7" r="5.9" fill="#0b0b0b"/><path d="M6.5 1.6Q3 2 2 5Q4 3 7.5 2.8z" fill="#777" opacity=".8"/><path d="M2.6 5.6H7V3.4L11.4 6.8L7 10.2V8H2.6z" fill="#fff"/></svg>
<svg style="position:absolute;left:500px;top:67.5px" width="14" height="14" viewBox="0 0 14 14"><circle cx="7" cy="7" r="5.9" fill="#0b0b0b"/><path d="M6.5 1.6Q3 2 2 5Q4 3 7.5 2.8z" fill="#777" opacity=".8"/><path d="M2.6 5.6H7V3.4L11.4 6.8L7 10.2V8H2.6z" fill="#fff"/></svg>
</div>
<div id="inner"></div>
<div style="position:absolute;left:0;top:0;width:695px;height:382px">
<span class="g " style="left:66px;top:85px;letter-spacing:-0.27px;word-spacing:-0.7px">Current Leader of 5th Sentai is COL Kobuki, N. ( 3 political points)</span>
<span class="g " style="left:25.3px;top:96px;letter-spacing:-0.50px;word-spacing:-0.7px">Choose Leader</span>
<span class="g " style="left:106px;top:96px;letter-spacing:-0.28px;word-spacing:-0.7px">Exchange will cost 0 political points</span>
<span class="g " style="left:355.1px;top:96px;letter-spacing:-0.35px;word-spacing:-0.7px">Political Points Available:</span>
<span class="g " style="left:474.2px;top:96px;letter-spacing:-0.93px;word-spacing:-0.7px">125</span>
<span class="g y" style="left:25.3px;top:112px;letter-spacing:-0.51px;word-spacing:-0.7px">Name</span>
<span class="g y" style="left:165.5px;top:112px;letter-spacing:-0.45px;word-spacing:-0.7px">Leadership</span>
<span class="g y" style="left:235px;top:112px;letter-spacing:-0.14px;word-spacing:-0.7px">Inspiration</span>
<span class="g y" style="left:305.3px;top:112px;letter-spacing:-0.43px;word-spacing:-0.7px">Rank</span>
<span class="g y" style="left:355.1px;top:112px;letter-spacing:-0.34px;word-spacing:-0.7px">Points</span>
<span class="g y" style="left:395.1px;top:112px;letter-spacing:-0.13px;word-spacing:-0.7px">Naval</span>
<span class="g y" style="left:435.1px;top:112px;letter-spacing:0.01px;word-spacing:-0.7px">Land</span>
<span class="g y" style="left:475.1px;top:112px;letter-spacing:-0.48px;word-spacing:-0.7px">Air</span>
<span class="g y" style="left:515.1px;top:112px;letter-spacing:-0.02px;word-spacing:-0.7px">Admin</span>
<span class="g y" style="left:555.1px;top:112px;letter-spacing:-0.31px;word-spacing:-0.7px">Aggres</span>
<span class="g y" style="left:595.1px;top:112px;letter-spacing:-0.08px;word-spacing:-0.7px">Travel time</span>
<span class="g y" style="left:25.3px;top:127px;letter-spacing:-0.69px;word-spacing:-1.6px">Koda, B.</span>
<span class="g " style="left:165.5px;top:127px">54</span>
<span class="g " style="left:235px;top:127px">55</span>
<span class="g " style="left:305.3px;top:127px">LTC</span>
<span class="g " style="left:355.1px;top:127px">2</span>
<span class="g " style="left:395.1px;top:127px">14</span>
<span class="g " style="left:435.1px;top:127px">33</span>
<span class="g " style="left:475.1px;top:127px">63</span>
<span class="g " style="left:515.1px;top:127px">44</span>
<span class="g " style="left:555.1px;top:127px">61</span>
<span class="g " style="left:595.1px;top:127px">0</span>
<span class="g gr" style="left:25.3px;top:141px;letter-spacing:-0.36px;word-spacing:-1.6px">Kobuki, N.</span>
<span class="g gr" style="left:165.5px;top:141px">59</span>
<span class="g gr" style="left:235px;top:141px">59</span>
<span class="g gr" style="left:305.3px;top:141px">COL</span>
<span class="g gr" style="left:355.1px;top:141px">3</span>
<span class="g gr" style="left:395.1px;top:141px">18</span>
<span class="g gr" style="left:435.1px;top:141px">34</span>
<span class="g gr" style="left:475.1px;top:141px">63</span>
<span class="g gr" style="left:515.1px;top:141px">33</span>
<span class="g gr" style="left:555.1px;top:141px">60</span>
<span class="g gr" style="left:595.1px;top:141px">0</span>
<span class="g y" style="left:25.3px;top:155px;letter-spacing:-0.60px;word-spacing:-1.6px">Shirakawa, B.</span>
<span class="g " style="left:165.5px;top:155px">56</span>
<span class="g " style="left:235px;top:155px">55</span>
<span class="g " style="left:305.3px;top:155px">COL</span>
<span class="g " style="left:355.1px;top:155px">3</span>
<span class="g " style="left:395.1px;top:155px">16</span>
<span class="g " style="left:435.1px;top:155px">40</span>
<span class="g " style="left:475.1px;top:155px">62</span>
<span class="g " style="left:515.1px;top:155px">32</span>
<span class="g " style="left:555.1px;top:155px">60</span>
<span class="g " style="left:595.1px;top:155px">0</span>
<span class="g y" style="left:25.3px;top:169px;letter-spacing:-0.30px;word-spacing:-1.6px">Nekotani, F.</span>
<span class="g " style="left:165.5px;top:169px">54</span>
<span class="g " style="left:235px;top:169px">56</span>
<span class="g " style="left:305.3px;top:169px">COL</span>
<span class="g " style="left:355.1px;top:169px">3</span>
<span class="g " style="left:395.1px;top:169px">15</span>
<span class="g " style="left:435.1px;top:169px">37</span>
<span class="g " style="left:475.1px;top:169px">62</span>
<span class="g " style="left:515.1px;top:169px">49</span>
<span class="g " style="left:555.1px;top:169px">60</span>
<span class="g " style="left:595.1px;top:169px">0</span>
<span class="g y" style="left:25.3px;top:183px;letter-spacing:-0.63px;word-spacing:-1.6px">Fukuda, S.</span>
<span class="g " style="left:165.5px;top:183px">49</span>
<span class="g " style="left:235px;top:183px">55</span>
<span class="g " style="left:305.3px;top:183px">COL</span>
<span class="g " style="left:355.1px;top:183px">3</span>
<span class="g " style="left:395.1px;top:183px">9</span>
<span class="g " style="left:435.1px;top:183px">36</span>
<span class="g " style="left:475.1px;top:183px">62</span>
<span class="g " style="left:515.1px;top:183px">47</span>
<span class="g " style="left:555.1px;top:183px">60</span>
<span class="g " style="left:595.1px;top:183px">0</span>
<span class="g y" style="left:25.3px;top:197px;letter-spacing:-0.34px;word-spacing:-1.6px">Arita, E.</span>
<span class="g " style="left:165.5px;top:197px">48</span>
<span class="g " style="left:235px;top:197px">57</span>
<span class="g " style="left:305.3px;top:197px">MAJ</span>
<span class="g " style="left:355.1px;top:197px">1</span>
<span class="g " style="left:395.1px;top:197px">21</span>
<span class="g " style="left:435.1px;top:197px">39</span>
<span class="g " style="left:475.1px;top:197px">62</span>
<span class="g " style="left:515.1px;top:197px">41</span>
<span class="g " style="left:555.1px;top:197px">64</span>
<span class="g " style="left:595.1px;top:197px">0</span>
<span class="g y" style="left:25.3px;top:211px;letter-spacing:-0.21px;word-spacing:-1.6px">Shimada, Yasunari</span>
<span class="g " style="left:165.5px;top:211px">51</span>
<span class="g " style="left:235px;top:211px">60</span>
<span class="g " style="left:305.3px;top:211px">MAJ</span>
<span class="g " style="left:355.1px;top:211px">1</span>
<span class="g " style="left:395.1px;top:211px">16</span>
<span class="g " style="left:435.1px;top:211px">24</span>
<span class="g " style="left:475.1px;top:211px">61</span>
<span class="g " style="left:515.1px;top:211px">36</span>
<span class="g " style="left:555.1px;top:211px">66</span>
<span class="g " style="left:595.1px;top:211px">0</span>
<span class="g y" style="left:25.3px;top:225px;letter-spacing:-0.35px;word-spacing:-1.6px">Onishi, Hiroshi</span>
<span class="g " style="left:165.5px;top:225px">52</span>
<span class="g " style="left:235px;top:225px">56</span>
<span class="g " style="left:305.3px;top:225px">LTC</span>
<span class="g " style="left:355.1px;top:225px">2</span>
<span class="g " style="left:395.1px;top:225px">28</span>
<span class="g " style="left:435.1px;top:225px">38</span>
<span class="g " style="left:475.1px;top:225px">61</span>
<span class="g " style="left:515.1px;top:225px">31</span>
<span class="g " style="left:555.1px;top:225px">64</span>
<span class="g " style="left:595.1px;top:225px">0</span>
<span class="g y" style="left:25.3px;top:239px;letter-spacing:-0.40px;word-spacing:-1.6px">Narimatsu, U.</span>
<span class="g " style="left:165.5px;top:239px">54</span>
<span class="g " style="left:235px;top:239px">56</span>
<span class="g " style="left:305.3px;top:239px">LTC</span>
<span class="g " style="left:355.1px;top:239px">2</span>
<span class="g " style="left:395.1px;top:239px">20</span>
<span class="g " style="left:435.1px;top:239px">35</span>
<span class="g " style="left:475.1px;top:239px">61</span>
<span class="g " style="left:515.1px;top:239px">46</span>
<span class="g " style="left:555.1px;top:239px">60</span>
<span class="g " style="left:595.1px;top:239px">0</span>
<span class="g y" style="left:25.3px;top:253px;letter-spacing:-0.13px;word-spacing:-1.6px">Muta, Hirobumi</span>
<span class="g " style="left:165.5px;top:253px">56</span>
<span class="g " style="left:235px;top:253px">59</span>
<span class="g " style="left:305.3px;top:253px">MAJ</span>
<span class="g " style="left:355.1px;top:253px">1</span>
<span class="g " style="left:395.1px;top:253px">20</span>
<span class="g " style="left:435.1px;top:253px">30</span>
<span class="g " style="left:475.1px;top:253px">61</span>
<span class="g " style="left:515.1px;top:253px">50</span>
<span class="g " style="left:555.1px;top:253px">64</span>
<span class="g " style="left:595.1px;top:253px">0</span>
<span class="g y" style="left:25.3px;top:267px;letter-spacing:-0.36px;word-spacing:-1.6px">Miyaki, F.</span>
<span class="g " style="left:165.5px;top:267px">53</span>
<span class="g " style="left:235px;top:267px">56</span>
<span class="g " style="left:305.3px;top:267px">COL</span>
<span class="g " style="left:355.1px;top:267px">3</span>
<span class="g " style="left:395.1px;top:267px">15</span>
<span class="g " style="left:435.1px;top:267px">31</span>
<span class="g " style="left:475.1px;top:267px">61</span>
<span class="g " style="left:515.1px;top:267px">42</span>
<span class="g " style="left:555.1px;top:267px">60</span>
<span class="g " style="left:595.1px;top:267px">0</span>
<span class="g y" style="left:25.3px;top:281px;letter-spacing:-0.44px;word-spacing:-1.6px">Mikami, G.</span>
<span class="g " style="left:165.5px;top:281px">51</span>
<span class="g " style="left:235px;top:281px">59</span>
<span class="g " style="left:305.3px;top:281px">COL</span>
<span class="g " style="left:355.1px;top:281px">3</span>
<span class="g " style="left:395.1px;top:281px">20</span>
<span class="g " style="left:435.1px;top:281px">33</span>
<span class="g " style="left:475.1px;top:281px">61</span>
<span class="g " style="left:515.1px;top:281px">45</span>
<span class="g " style="left:555.1px;top:281px">64</span>
<span class="g " style="left:595.1px;top:281px">0</span>
<span class="g y" style="left:25.3px;top:295px;letter-spacing:-0.36px;word-spacing:-1.6px">Koyanagi, G.</span>
<span class="g " style="left:165.5px;top:295px">56</span>
<span class="g " style="left:235px;top:295px">57</span>
<span class="g " style="left:305.3px;top:295px">COL</span>
<span class="g " style="left:355.1px;top:295px">3</span>
<span class="g " style="left:395.1px;top:295px">13</span>
<span class="g " style="left:435.1px;top:295px">32</span>
<span class="g " style="left:475.1px;top:295px">61</span>
<span class="g " style="left:515.1px;top:295px">36</span>
<span class="g " style="left:555.1px;top:295px">62</span>
<span class="g " style="left:595.1px;top:295px">0</span>
<span class="g y" style="left:25.3px;top:309px;letter-spacing:-0.29px;word-spacing:-1.6px">Komoda, N.</span>
<span class="g " style="left:165.5px;top:309px">60</span>
<span class="g " style="left:235px;top:309px">55</span>
<span class="g " style="left:305.3px;top:309px">MAJ</span>
<span class="g " style="left:355.1px;top:309px">1</span>
<span class="g " style="left:395.1px;top:309px">9</span>
<span class="g " style="left:435.1px;top:309px">24</span>
<span class="g " style="left:475.1px;top:309px">61</span>
<span class="g " style="left:515.1px;top:309px">41</span>
<span class="g " style="left:555.1px;top:309px">63</span>
<span class="g " style="left:595.1px;top:309px">0</span>
<span class="g y" style="left:25.3px;top:323px;letter-spacing:-0.39px;word-spacing:-1.6px">Kawato, N.</span>
<span class="g " style="left:165.5px;top:323px">53</span>
<span class="g " style="left:235px;top:323px">55</span>
<span class="g " style="left:305.3px;top:323px">MAJ</span>
<span class="g " style="left:355.1px;top:323px">1</span>
<span class="g " style="left:395.1px;top:323px">15</span>
<span class="g " style="left:435.1px;top:323px">29</span>
<span class="g " style="left:475.1px;top:323px">61</span>
<span class="g " style="left:515.1px;top:323px">49</span>
<span class="g " style="left:555.1px;top:323px">61</span>
<span class="g " style="left:595.1px;top:323px">0</span>
<span class="g y" style="left:25.3px;top:337px;letter-spacing:-0.59px;word-spacing:-1.6px">Kawano, S.</span>
<span class="g " style="left:165.5px;top:337px">52</span>
<span class="g " style="left:235px;top:337px">57</span>
<span class="g " style="left:305.3px;top:337px">MAJ</span>
<span class="g " style="left:355.1px;top:337px">1</span>
<span class="g " style="left:395.1px;top:337px">14</span>
<span class="g " style="left:435.1px;top:337px">29</span>
<span class="g " style="left:475.1px;top:337px">61</span>
<span class="g " style="left:515.1px;top:337px">45</span>
<span class="g " style="left:555.1px;top:337px">60</span>
<span class="g " style="left:595.1px;top:337px">0</span>
<span class="g " style="left:20.8px;top:357px;letter-spacing:-0.28px;word-spacing:-0.7px">Evaluation of Kobuki, N.:</span>
<span class="g " style="left:25.3px;top:368px;letter-spacing:-0.26px;word-spacing:-0.7px">COL Kobuki, N. is known to be a promising and aggressive officer.</span>
<div style="position:absolute;left:671px;top:125px;width:12px;height:223px;background:#45463b;border-left:1px solid #a5a594;border-right:1px solid #2e2e28"></div>
<div class="sbb" style="left:671px;top:125px"><svg width="12" height="10" viewBox="0 0 12 10" style="display:block"><path d="M2.8 8V5L6 2.6L9.2 5V8z" fill="#f2f2ea"/></svg></div>
<div class="sbb" style="left:673px;top:138px;width:9px;height:10px"></div>
<div class="sbb" style="left:671px;top:336px"><svg width="12" height="10" viewBox="0 0 12 10" style="display:block"><path d="M3 3V5.5L6.2 7.9L9.4 5.5V3z" fill="#f2f2ea"/></svg></div>
</div>
</div>
</body></html>
